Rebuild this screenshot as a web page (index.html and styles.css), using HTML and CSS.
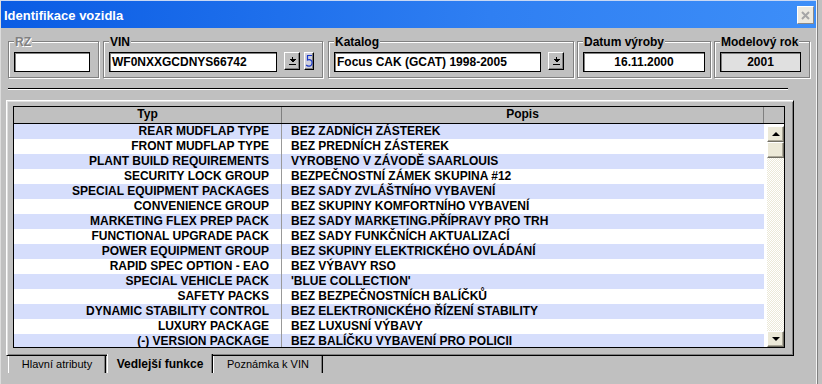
FILE: index.html
```html
<!DOCTYPE html>
<html lang="cs">
<head>
    <meta charset="UTF-8">
    <title>Identifikace vozidla</title>
    <link rel="stylesheet" href="styles.css">
</head>
<body>
    <div class="window">
        <div class="titlebar">
            <span class="title">Identifikace vozidla</span>
            <button class="close" type="button">
                <svg width="9" height="9" viewBox="0 0 9 9"><path d="M1 1 L8 8 M8 1 L1 8" stroke="#a6a6a6" stroke-width="2"/></svg>
            </button>
        </div>

        <div class="fields">
            <fieldset class="group g-rz">
                <legend class="disabled">RZ</legend>
                <div class="field w-rz"></div>
            </fieldset>
            <fieldset class="group g-vin">
                <legend>VIN</legend>
                <div class="field w-vin">WF0NXXGCDNYS66742</div>
                <button class="btn drop" type="button">
                    <svg width="7" height="8" viewBox="0 0 7 8" shape-rendering="crispEdges"><rect x="3" y="0" width="1" height="2"/><polygon points="0,2 7,2 3.5,5.5"/><rect x="0" y="7" width="7" height="1"/></svg>
                </button>
                <button class="btn refresh" type="button">
                    <svg width="8" height="14" viewBox="0 0 8 14"><path d="M2 1.5 H7 M2.5 1.5 V6 C5.5 4.8 7.5 6.8 7 9.5 C6.5 12.5 3 13 1.2 11" stroke="#1838c8" stroke-width="1.2" fill="none"/></svg>
                </button>
            </fieldset>
            <fieldset class="group g-kat">
                <legend>Katalog</legend>
                <div class="field w-kat">Focus CAK (GCAT) 1998-2005</div>
                <button class="btn drop" type="button">
                    <svg width="7" height="8" viewBox="0 0 7 8" shape-rendering="crispEdges"><rect x="3" y="0" width="1" height="2"/><polygon points="0,2 7,2 3.5,5.5"/><rect x="0" y="7" width="7" height="1"/></svg>
                </button>
            </fieldset>
            <fieldset class="group g-dat">
                <legend>Datum výroby</legend>
                <div class="field w-dat center">16.11.2000</div>
            </fieldset>
            <fieldset class="group g-rok">
                <legend>Modelový rok</legend>
                <div class="field w-rok center readonly">2001</div>
            </fieldset>
        </div>

        <div class="separator"></div>

        <div class="tabpage">
            <div class="grid">
                <div class="grid-head">
                    <div class="hcell c-typ">Typ</div>
                    <div class="hcell c-popis">Popis</div>
                    <div class="hcell c-corner"></div>
                </div>
                <div class="grid-body">
                    <div class="rows">
                        <div class="row"><div class="c-typ">REAR MUDFLAP TYPE</div><div class="c-popis">BEZ ZADNÍCH ZÁSTEREK</div></div>
                        <div class="row"><div class="c-typ">FRONT MUDFLAP TYPE</div><div class="c-popis">BEZ PREDNÍCH ZÁSTEREK</div></div>
                        <div class="row"><div class="c-typ">PLANT BUILD REQUIREMENTS</div><div class="c-popis">VYROBENO V ZÁVODĚ SAARLOUIS</div></div>
                        <div class="row"><div class="c-typ">SECURITY LOCK GROUP</div><div class="c-popis">BEZPEČNOSTNÍ ZÁMEK SKUPINA #12</div></div>
                        <div class="row"><div class="c-typ">SPECIAL EQUIPMENT PACKAGES</div><div class="c-popis">BEZ SADY ZVLÁŠTNÍHO VYBAVENÍ</div></div>
                        <div class="row"><div class="c-typ">CONVENIENCE GROUP</div><div class="c-popis">BEZ SKUPINY KOMFORTNÍHO VYBAVENÍ</div></div>
                        <div class="row"><div class="c-typ">MARKETING FLEX PREP PACK</div><div class="c-popis">BEZ SADY MARKETING.PŘÍPRAVY PRO TRH</div></div>
                        <div class="row"><div class="c-typ">FUNCTIONAL UPGRADE PACK</div><div class="c-popis">BEZ SADY FUNKČNÍCH AKTUALIZACÍ</div></div>
                        <div class="row"><div class="c-typ">POWER EQUIPMENT GROUP</div><div class="c-popis">BEZ SKUPINY ELEKTRICKÉHO OVLÁDÁNÍ</div></div>
                        <div class="row"><div class="c-typ">RAPID SPEC OPTION - EAO</div><div class="c-popis">BEZ VÝBAVY RSO</div></div>
                        <div class="row"><div class="c-typ">SPECIAL VEHICLE PACK</div><div class="c-popis">'BLUE COLLECTION'</div></div>
                        <div class="row"><div class="c-typ">SAFETY PACKS</div><div class="c-popis">BEZ BEZPEČNOSTNÍCH BALÍČKŮ</div></div>
                        <div class="row"><div class="c-typ">DYNAMIC STABILITY CONTROL</div><div class="c-popis">BEZ ELEKTRONICKÉHO ŘÍZENÍ STABILITY</div></div>
                        <div class="row"><div class="c-typ">LUXURY PACKAGE</div><div class="c-popis">BEZ LUXUSNÍ VÝBAVY</div></div>
                        <div class="row"><div class="c-typ">(-) VERSION PACKAGE</div><div class="c-popis">BEZ BALÍČKU VYBAVENÍ PRO POLICII</div></div>
                    </div>
                    <div class="vscroll">
                        <div class="sbtn"><span class="arrow-up"></span></div>
                        <div class="sbtn thumb"></div>
                        <div class="track"></div>
                        <div class="sbtn"><span class="arrow-down"></span></div>
                    </div>
                </div>
            </div>
        </div>

        <div class="tabs">
            <div class="tab t-main">Hlavní atributy</div>
            <div class="tab t-side active">Vedlejší funkce</div>
            <div class="tab t-note">Poznámka k VIN</div>
        </div>
    </div>
</body>
</html>
```

FILE: styles.css
```css
* {
    box-sizing: border-box;
}
body {
    margin: 0;
    width: 822px;
    height: 384px;
    overflow: hidden;
    background: #c0c0c0;
    font-family: "Liberation Sans", Arial, sans-serif;
    font-size: 12px;
    color: #000;
}
.window {
    width: 818px;
    height: 384px;
    border-left: 1px solid #dcdcdc;
    border-right: 1px solid #808080;
    padding-right: 1px;
    box-shadow: inset -1px 0 0 #f4f4f4;
}

/* title bar */
.titlebar {
    height: 28px;
    border-top: 1px solid #c8d8f4;
    background: linear-gradient(to right, #0a5ce4, #2f7ff2 60%, #3d8ef8);
    display: flex;
    justify-content: space-between;
    align-items: flex-start;
    padding: 0 2px 0 3px;
}
.title {
    color: #fff;
    font-weight: bold;
    font-size: 13px;
    line-height: 15px;
    padding-top: 7px;
}
.close {
    margin-top: 5px;
    width: 17px;
    height: 18px;
    padding: 0;
    background: #ece9e0;
    border: 1px solid;
    border-color: #fff #8a8a8a #8a8a8a #fff;
    display: flex;
    align-items: center;
    justify-content: center;
}

/* top group boxes */
.fields {
    display: flex;
    margin-left: 7px;
    padding-top: 6px;
}
.group {
    margin: 0;
    min-width: 0;
    border: 1px solid #808080;
    box-shadow: inset 1px 1px 0 #fff, 1px 1px 0 #fff;
    padding: 3px 0 5px 5px;
    display: flex;
    align-items: flex-start;
}
.group legend {
    padding: 2px 1px 0;
    margin-left: 0;
    line-height: 13px;
    font-weight: bold;
    background: #c0c0c0;
}
.group legend.disabled {
    color: #808080;
    text-shadow: 1px 1px 0 #fff;
}
.g-rz { width: 91px; }
.g-vin { width: 220px; margin-left: 4px; }
.g-kat { width: 246px; margin-left: 5px; }
.g-dat { width: 134px; margin-left: 3px; }
.g-rok { width: 96px; margin-left: 3px; }

.field {
    height: 20px;
    background: #fff;
    border: 1px solid #000;
    box-shadow: inset 1px 1px 0 #808080;
    padding: 0 2px;
    line-height: 18px;
    font-weight: bold;
    white-space: nowrap;
    overflow: hidden;
}
.field.center { text-align: center; }
.field.readonly { background: #e0e0e0; }
.w-rz { width: 76px; }
.w-vin { width: 168px; }
.w-kat { width: 207px; }
.w-dat { width: 122px; }
.w-rok { width: 81px; }

.btn {
    height: 18px;
    padding: 0;
    background: #c0c0c0;
    border: 1px solid;
    border-color: #fff #000 #000 #fff;
    box-shadow: inset -1px -1px 0 #808080;
    display: flex;
    align-items: center;
    justify-content: center;
}
.drop {
    width: 16px;
    margin-left: 7px;
}
.refresh {
    width: 10px;
    margin-left: 4px;
    background: #d0d0dc;
}

.separator {
    width: 780px;
    margin: 10px 0 10px 7px;
    border-top: 1px solid #000;
    border-bottom: 1px solid #fff;
}

/* tab page + grid */
.tabpage {
    width: 788px;
    height: 256px;
    margin-left: 5px;
    border: 1px solid;
    border-color: #fff #000 #000 #fff;
    box-shadow: inset 1px 1px 0 #dfdfdf, inset -1px -1px 0 #808080;
    padding: 5px 8px 7px 6px;
}
.grid {
    width: 772px;
    border: 1px solid #000;
}
.grid-head {
    display: flex;
    height: 17px;
    border-bottom: 1px solid #000;
    background: #c0c0c0;
    font-weight: bold;
}
.hcell {
    line-height: 15px;
    text-align: center;
    border-right: 1px solid #808080;
}
.grid-head .c-typ { width: 268px; }
.grid-head .c-popis { width: 482px; }
.grid-head .c-corner { width: 20px; border-right: 0; }

.grid-body {
    display: flex;
    height: 223px;
}
.rows {
    width: 750px;
    overflow: hidden;
    font-weight: bold;
    white-space: nowrap;
}
.row {
    display: flex;
    height: 15px;
    line-height: 14px;
    background: #fff;
}
.row:nth-child(odd) {
    background: #d6defc;
}
.row .c-typ {
    width: 268px;
    padding-right: 12px;
    text-align: right;
    border-right: 1px solid #999;
}
.row .c-popis {
    width: 482px;
    padding-left: 9px;
}

.vscroll {
    width: 20px;
    background: #fff;
    padding: 2px 0 0 3px;
    display: flex;
    flex-direction: column;
}
.sbtn {
    width: 17px;
    height: 16px;
    flex: none;
    background: #ece9d8;
    border: 1px solid;
    border-color: #fff #716f64 #716f64 #fff;
    box-shadow: inset -1px -1px 0 #aca899;
    display: flex;
    align-items: center;
    justify-content: center;
}
.track {
    flex: 1;
    background: repeating-conic-gradient(#fff 0 25%, #ece9d8 0 50%) 0 0 / 2px 2px;
}
.arrow-up {
    width: 0;
    height: 0;
    border-left: 4px solid transparent;
    border-right: 4px solid transparent;
    border-bottom: 4px solid #000;
}
.arrow-down {
    width: 0;
    height: 0;
    border-left: 4px solid transparent;
    border-right: 4px solid transparent;
    border-top: 4px solid #000;
}

/* bottom tabs */
.tabs {
    display: flex;
    align-items: flex-start;
    margin-left: 7px;
}
.tab {
    height: 17px;
    line-height: 16px;
    font-size: 11px;
    text-align: center;
    white-space: nowrap;
    border-left: 1px solid #fff;
    border-right: 1px solid #000;
    box-shadow: inset -1px 0 0 #808080;
}
.t-main { width: 98px; }
.t-side { width: 106px; margin-left: 1px; }
.t-note { width: 110px; }
.tab.active {
    position: relative;
    height: 19px;
    margin-top: -2px;
    padding-top: 2px;
    font-size: 12px;
    font-weight: bold;
    background: #c0c0c0;
}
```
